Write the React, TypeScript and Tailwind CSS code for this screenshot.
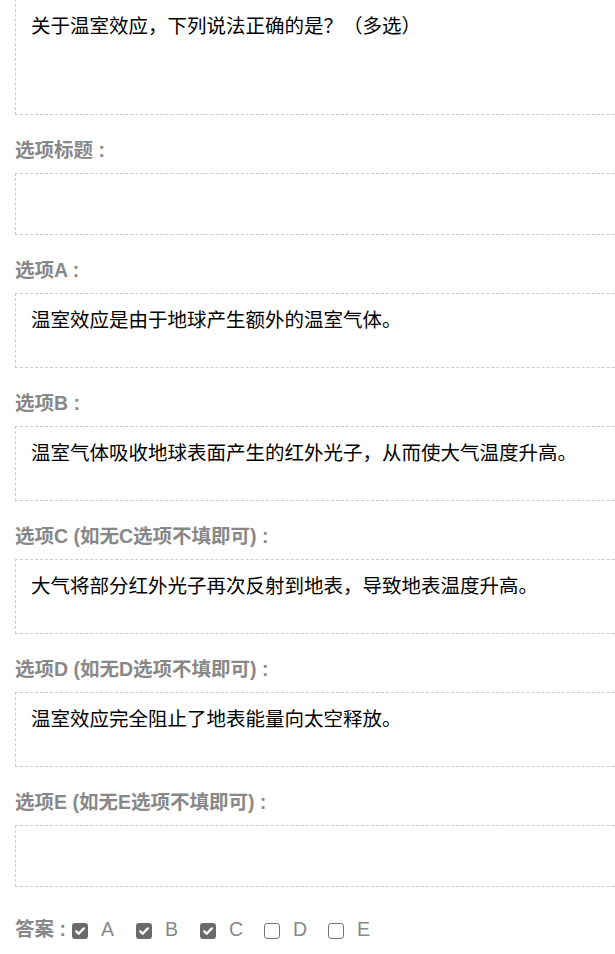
import React from 'react';

interface FieldProps {
  label?: string;
  text?: string;
  height: string;
}

const options = [
  { key: 'A', checked: true },
  { key: 'B', checked: true },
  { key: 'C', checked: true },
  { key: 'D', checked: false },
  { key: 'E', checked: false },
];

const Field: React.FC<FieldProps> = ({ label, text, height }) => (
  <div>
    {label && (
      <div className="ml-[15px] pt-[21px] pb-[9px] text-[19.5px] leading-[28px] font-bold text-[#888] whitespace-pre">
        {label}
      </div>
    )}
    <div
      className={`ml-[15px] w-[700px] box-border border border-dashed border-[#ccc] px-[15px] pt-[12px] text-[19.5px] leading-[28px] text-black whitespace-nowrap ${height}`}
    >
      {text}
    </div>
  </div>
);

const Checkbox: React.FC<{ checked: boolean }> = ({ checked }) =>
  checked ? (
    <span className="flex w-[16px] h-[16px] items-center justify-center rounded-[3px] bg-[#6b6b6b] mt-[4px] shrink-0">
      <svg width="12" height="12" viewBox="0 0 12 12" fill="none">
        <path d="M2.2 6.3l2.4 2.4L9.8 3.4" stroke="white" strokeWidth="2.3" strokeLinecap="round" strokeLinejoin="round" />
      </svg>
    </span>
  ) : (
    <span className="block w-[16px] h-[16px] rounded-[3px] border-[1.5px] border-[#767676] bg-white mt-[4px] shrink-0" />
  );

const App: React.FC = () => {
  return (
    <div className="w-[615px] h-[954px] overflow-hidden bg-white font-['Liberation_Sans','Noto_Sans_CJK_SC',sans-serif]">
      <div className="mt-[-1px]">
        <Field text="关于温室效应，下列说法正确的是？（多选）" height="h-[116px]" />
      </div>
      <Field label="选项标题 :" height="h-[62px]" />
      <Field label="选项A :" text="温室效应是由于地球产生额外的温室气体。" height="h-[75px]" />
      <Field label="选项B :" text="温室气体吸收地球表面产生的红外光子，从而使大气温度升高。" height="h-[75px]" />
      <Field label="选项C (如无C选项不填即可) :" text="大气将部分红外光子再次反射到地表，导致地表温度升高。" height="h-[75px]" />
      <Field label="选项D (如无D选项不填即可) :" text="温室效应完全阻止了地表能量向太空释放。" height="h-[75px]" />
      <Field label="选项E (如无E选项不填即可) :" height="h-[62px]" />

      <div className="mt-[28px] ml-[15px] flex items-center h-[28px]">
        <span className="w-[57px] text-[19.5px] leading-[28px] font-bold text-[#888] whitespace-pre">答案 :</span>
        {options.map(opt => (
          <span key={opt.key} className="flex items-center w-[64px]">
            <Checkbox checked={opt.checked} />
            <span className="ml-[13px] text-[19.5px] leading-[28px] text-[#888]">{opt.key}</span>
          </span>
        ))}
      </div>
    </div>
  );
};

export default App;
